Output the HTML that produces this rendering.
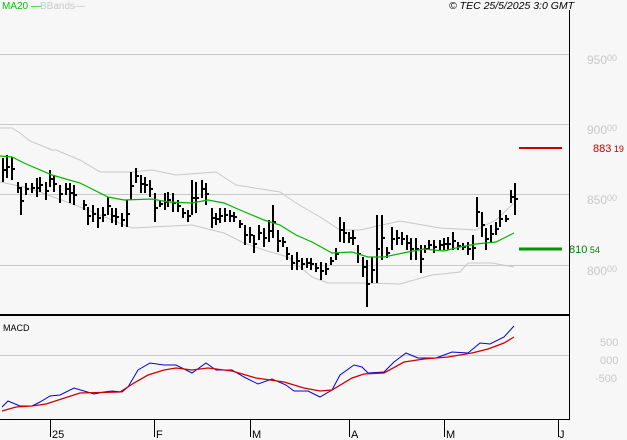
<!DOCTYPE html>
<html><head><meta charset="utf-8"><style>
html,body{margin:0;padding:0;background:#f7f7f7;}
body{width:627px;height:440px;overflow:hidden;position:relative;font-family:"Liberation Sans",sans-serif;}
svg{position:absolute;left:0;top:0;}
</style></head><body>
<svg id="s" width="627" height="440" xmlns="http://www.w3.org/2000/svg" font-family="Liberation Sans, sans-serif">
<rect width="627" height="440" fill="#f7f7f7"/>
<g stroke="#c8c8c8" stroke-width="1">
<line x1="0" y1="54.5" x2="569" y2="54.5"/>
<line x1="0" y1="124.5" x2="569" y2="124.5"/>
<line x1="0" y1="194.5" x2="569" y2="194.5"/>
<line x1="0" y1="265.5" x2="569" y2="265.5"/>
<line x1="0" y1="355.5" x2="569" y2="355.5"/>
</g>
<g fill="#c8c8c8" font-size="12">
<text x="587" y="64">950<tspan font-size="9" dy="-3">00</tspan></text>
<text x="587" y="134">900<tspan font-size="9" dy="-3">00</tspan></text>
<text x="587" y="204">850<tspan font-size="9" dy="-3">00</tspan></text>
<text x="587" y="275">800<tspan font-size="9" dy="-3">00</tspan></text>
<text x="600" y="346" font-size="11">500</text>
<text x="600" y="364" font-size="11">000</text>
<text x="595" y="382" font-size="11">-500</text>
</g>
<polyline fill="none" stroke="#c8c8c8" stroke-width="1" points="0,128 12,128 20,133 30,141 40,145 52,150 56,150 80,160 100,172 132,172 152,170 176,175 216,172 236,185 280,192 296,203 320,217 340,230 360,230 400,221 440,228 476,230 496,220 514,203"/>
<polyline fill="none" stroke="#c8c8c8" stroke-width="1" points="0,182 24,187 40,192 80,207 112,220 132,228 152,227 192,225 224,233 244,243 264,250 288,257 312,277 328,283 360,283 400,284 432,275 460,272 468,263 492,263 514,267"/>
<g id="bars" stroke="#000" stroke-width="2" fill="none"></g>
<polyline fill="none" stroke="#00b400" stroke-width="1.2" points="0,156 12,157 24,163 52,175 80,183 108,197 124,200 152,199 168,202 192,203 208,200 224,203 240,210 264,220 280,225 296,235 312,242 332,253 352,252 368,257 384,257 408,252 424,249 444,251 460,247 476,244 496,242 514,233"/>
<line x1="519" y1="148" x2="562" y2="148" stroke="#c80000" stroke-width="2"/>
<text x="593" y="152" fill="#c80000" font-size="11">883<tspan font-size="9"> 19</tspan></text>
<line x1="519" y1="249" x2="562" y2="249" stroke="#009600" stroke-width="3"/>
<text x="569" y="253" fill="#008000" font-size="11">810<tspan font-size="9"> 54</tspan></text>
<text x="2" y="9" fill="#00c800" font-size="10">MA20 —</text>
<text x="40" y="9" fill="#c8c8c8" font-size="10">BBands—</text>
<text x="449" y="9" fill="#000" font-size="10.5" font-style="italic">© TEC 25/5/2025 3:0 GMT</text>
<line x1="569.5" y1="10" x2="569.5" y2="419" stroke="#000" stroke-width="1"/>
<line x1="0" y1="315" x2="569" y2="315" stroke="#000" stroke-width="2"/>
<line x1="0" y1="419.5" x2="570" y2="419.5" stroke="#000" stroke-width="1"/>
<text x="3" y="331" fill="#000" font-size="9">MACD</text>
<polyline fill="none" stroke="#0000e0" stroke-width="1" points="2,407 8,401 20,406 32,406 40,402 50,396 60,395 74,388 84,391 94,394 104,392 112,391 122,392 128,387 138,370 150,363 164,365 176,365 192,373 206,363 216,370 232,370 244,377 258,384 272,379 286,385 294,391 308,391 320,397 332,390 340,375 354,365 362,367 368,373 384,372 394,362 406,353 418,358 436,358 452,352 468,353 480,343 490,344 504,337 514,326"/>
<polyline fill="none" stroke="#d00000" stroke-width="1.3" points="2,411 16,407 32,406 46,404 80,393 120,392 134,383 148,375 164,370 176,368 192,370 208,368 232,371 256,378 284,382 304,388 320,391 332,390 352,378 364,374 384,373 404,362 424,359 448,357 472,353 488,349 504,343 514,337"/>
<g stroke="#000" stroke-width="1">
<line x1="50.5" y1="419" x2="50.5" y2="437"/><line x1="154.5" y1="419" x2="154.5" y2="437"/>
<line x1="250.5" y1="419" x2="250.5" y2="437"/><line x1="349.5" y1="419" x2="349.5" y2="437"/>
<line x1="444.5" y1="419" x2="444.5" y2="437"/><line x1="558.5" y1="419" x2="558.5" y2="437"/>
</g>
<g fill="#000" font-size="11">
<text x="52" y="438">25</text><text x="156" y="438">F</text><text x="252" y="438">M</text>
<text x="351" y="438">A</text><text x="446" y="438">M</text><text x="559" y="438">J</text>
</g>
</svg>
<script>
var d=[[3,158,182],[7,155,178],[12,157,180],[18,182,193],[21,187,215],[26,183,195],[32,183,193],[37,178,197],[40,177,192],[46,182,200],[50,170,187],[54,175,192],[60,185,203],[66,183,195],[70,183,203],[74,185,205],[84,200,210],[88,207,225],[93,205,222],[98,208,228],[103,207,222],[108,197,215],[112,208,223],[116,208,225],[122,213,227],[127,200,227],[131,172,200],[136,168,183],[141,175,193],[145,177,193],[150,180,197],[155,193,222],[160,200,207],[165,193,210],[168,192,207],[173,193,212],[178,200,212],[183,208,218],[188,210,222],[192,180,215],[196,182,213],[202,180,198],[206,183,205],[212,208,228],[216,213,225],[220,208,223],[225,208,222],[230,210,222],[234,212,222],[240,220,228],[245,225,245],[250,227,243],[254,235,253],[259,225,240],[264,228,247],[269,220,242],[273,205,238],[278,230,252],[283,237,247],[287,247,260],[292,255,270],[297,252,270],[302,258,270],[307,258,268],[311,258,270],[316,263,272],[321,262,280],[326,263,275],[331,257,265],[336,248,260],[340,217,242],[344,222,243],[349,232,243],[353,230,245],[358,245,263],[363,257,277],[367,260,307],[372,257,283],[377,215,283],[382,215,260],[387,247,258],[392,227,250],[397,230,245],[402,232,245],[407,235,250],[411,238,260],[416,238,260],[421,245,273],[425,245,253],[429,240,250],[434,240,253],[440,240,250],[444,238,250],[448,237,250],[453,232,250],[458,242,250],[463,243,250],[468,242,255],[473,235,260],[477,197,227],[482,212,237],[486,228,250],[491,225,243],[496,222,235],[500,210,227],[506,215,222],[511,190,203],[515,183,215]];
var p="";d.forEach(function(b){var m=Math.round((b[1]+b[2])/2);p+="M"+b[0]+" "+b[1]+"V"+b[2]+"M"+(b[0]+1)+" "+m+"h2";});
var e=document.createElementNS("http://www.w3.org/2000/svg","path");e.setAttribute("d",p);
document.getElementById("bars").appendChild(e);
</script>
</body></html>
